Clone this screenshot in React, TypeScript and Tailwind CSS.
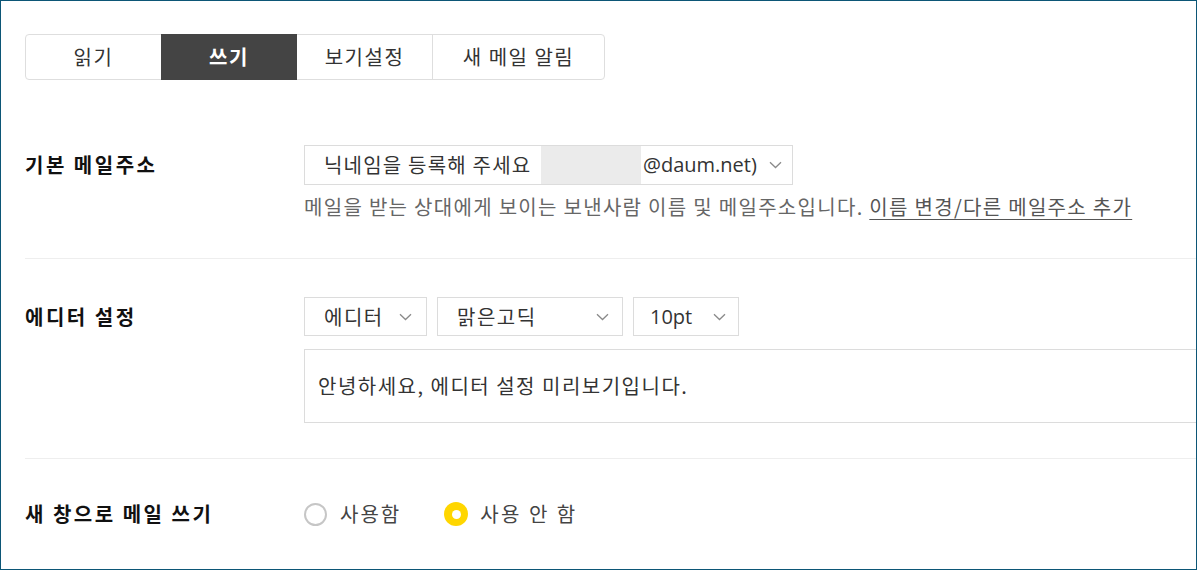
import React from "react";

const font = { fontFamily: '"Noto Sans CJK KR", "Noto Sans", sans-serif' };
const latin = { fontFamily: '"Open Sans", "Noto Sans", sans-serif' };

function Chevron({ className = "" }: { className?: string }) {
  return (
    <svg width="13" height="8" viewBox="0 0 13 8" className={className} fill="none">
      <path d="M1 1.2 L6.5 6.5 L12 1.2" stroke="#8a8a8a" strokeWidth="1.3" />
    </svg>
  );
}

function Select({ label, w, pl, chevRight, lat }: { label: string; w: string; pl: string; chevRight: string; lat?: boolean }) {
  return (
    <div className={`flex items-center justify-between h-[39px] border border-[#dcdcdc] bg-white shrink-0 ${w} ${pl} ${chevRight}`}>
      <span className={`text-[20px] text-[#333] leading-none ${lat ? "tracking-normal" : ""}`} style={lat ? latin : undefined}>{label}</span>
      <Chevron />
    </div>
  );
}

export default function App() {
  return (
    <div
      className="w-[1197px] h-[570px] border border-[#0c5676] overflow-hidden bg-white pl-6 pt-[33px] text-[20px] tracking-[1.5px]"
      style={font}
    >
      {/* Tabs */}
      <div className="flex w-[580px] h-[46px] border border-[#dedede] rounded-[4px] text-[#333]">
        <div className="w-[135px] flex items-center justify-center">읽기</div>
        <div className="w-[136px] -my-px h-[46px] bg-[#444444] text-white font-bold flex items-center justify-center">쓰기</div>
        <div className="w-[135px] flex items-center justify-center">보기설정</div>
        <div className="flex-1 border-l border-[#dedede] flex items-center justify-center">새 메일 알림</div>
      </div>

      {/* Section 1 */}
      <div className="flex mt-[65px] pb-[39px] border-b border-[#eeeeee]">
        <div className="w-[279px] shrink-0 h-[40px] flex items-center font-bold tracking-[2.5px] text-[#111]">기본 메일주소</div>
        <div className="flex flex-col">
          <div className="flex items-center w-[489px] h-[40px] border border-[#dcdcdc] pl-[19px] pr-[10px] text-[#333]">
            <span className="w-[217px] shrink-0 whitespace-nowrap leading-none tracking-[1.2px]">닉네임을 등록해 주세요</span>
            <span className="w-[100px] h-[38px] bg-[#ebebeb] shrink-0"></span>
            <span className="ml-[2px] leading-none tracking-normal" style={latin}>@daum.net)</span>
            <Chevron className="ml-auto" />
          </div>
          <div className="mt-[10px] leading-[24px] text-[#666] whitespace-nowrap tracking-[1.3px]">
            메일을 받는 상대에게 보이는 보낸사람 이름 및 메일주소입니다.{" "}
            <span className="underline decoration-1 underline-offset-[4px] text-[#555]">이름 변경/다른 메일주소 추가</span>
          </div>
        </div>
      </div>

      {/* Section 2 */}
      <div className="flex pt-[38px] pb-[35px] border-b border-[#eeeeee]">
        <div className="w-[279px] shrink-0 h-[39px] flex items-center font-bold tracking-[2.5px] text-[#111]">에디터 설정</div>
        <div className="flex flex-col">
          <div className="flex gap-[10px]">
            <Select label="에디터" w="w-[123px]" pl="pl-[19px]" chevRight="pr-[14px]" />
            <Select label="맑은고딕" w="w-[186px]" pl="pl-[19px]" chevRight="pr-[13px]" />
            <Select label="10pt" w="w-[106px]" pl="pl-[16px]" chevRight="pr-[12px]" lat />
          </div>
          <div className="mt-[13px] w-[920px] h-[74px] border border-[#dcdcdc] pl-[13px] flex items-center text-[#333]">
            안녕하세요, 에디터 설정 미리보기입니다.
          </div>
        </div>
      </div>

      {/* Section 3 */}
      <div className="flex pt-[43px]">
        <div className="w-[279px] shrink-0 h-[24px] flex items-center font-bold tracking-[2.5px] text-[#111]">새 창으로 메일 쓰기</div>
        <div className="flex items-center h-[24px] text-[#444]">
          <span className="w-[23px] h-[23px] rounded-full border-2 border-[#c6c6c6] bg-white"></span>
          <span className="ml-[13px] tracking-[2px]">사용함</span>
          <span className="ml-[43px] w-[24px] h-[24px] rounded-full bg-[#ffd600] flex items-center justify-center">
            <span className="w-[9px] h-[9px] rounded-full bg-white"></span>
          </span>
          <span className="ml-[12px] tracking-[2.5px]">사용 안 함</span>
        </div>
      </div>
    </div>
  );
}
